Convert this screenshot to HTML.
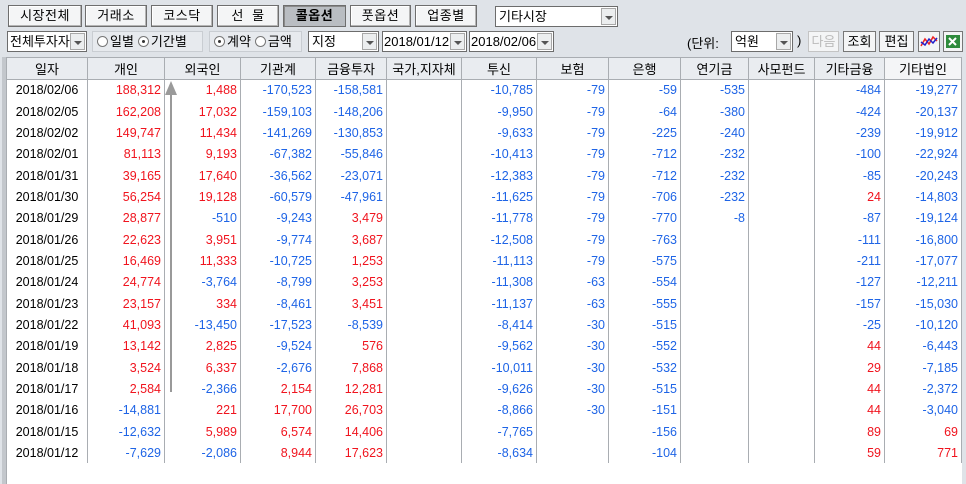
<!DOCTYPE html>
<html><head><meta charset="utf-8"><style>
*{margin:0;padding:0;box-sizing:border-box}
body{width:966px;height:484px;background:#dfe3e8;font-family:"Liberation Sans","Noto Sans CJK KR","NanumGothic",sans-serif;font-size:12px;color:#000;position:relative;overflow:hidden}
.a{position:absolute}
.btn{position:absolute;top:5px;height:22px;background:#f4f5f6;border:1px solid #6e6e6e;box-shadow:inset -1px -1px 0 #b5b5b5,inset 1px 1px 0 #fff;text-align:center;line-height:20px;font-size:13px;letter-spacing:0.5px}
.btn.on{background:#b9bdc2;font-weight:bold;box-shadow:inset 1px 1px 0 #8a8a8a}
.cb{position:absolute;height:21px;background:#fff;border:1px solid #6c6c6c;line-height:19px;padding-left:3px;font-size:13px}
.cb .dd{position:absolute;right:1px;top:1px;width:15px;height:17px;background:#eceeef;border:1px solid #a8a8a8}
.cb .dd:after{content:"";position:absolute;left:3px;top:7px;border-left:4px solid transparent;border-right:4px solid transparent;border-top:4px solid #555}
.grp{position:absolute;top:31px;height:21px;background:#e7eaee;border:1px solid #c9cdd2;line-height:19px;font-size:13px}
.rd{display:inline-block;width:11px;height:11px;border:1px solid #777;border-radius:50%;background:#fff;vertical-align:-1px;margin:0 2px 0 4px;position:relative}
.rd.on:after{content:"";position:absolute;left:3px;top:3px;width:3px;height:3px;border-radius:50%;background:#333}
.sb{position:absolute;top:31px;height:21px;background:#f4f5f6;border:1px solid #777;text-align:center;line-height:19px;font-size:13px}
table{position:absolute;left:6px;top:57px;border-collapse:collapse;table-layout:fixed;background:#fff}
th{height:22px;background:#e9ecf0;font-weight:normal;font-size:13px;border:1px solid #a9adb2;border-top:1px solid #a9adb2}
td{height:21.35px;text-align:right;padding-right:3px;border-left:1px solid #a9adb2;border-right:1px solid #a9adb2;font-size:12.5px;line-height:20px;white-space:nowrap}
td:first-child{text-align:center;padding:0}
.r{color:#f0141e}.b{color:#1e64e6}
</style></head><body>
<div class="btn" style="left:8px;width:74px">시장전체</div>
<div class="btn" style="left:85px;width:62px">거래소</div>
<div class="btn" style="left:151px;width:62px">코스닥</div>
<div class="btn" style="left:217px;width:62px">선 &nbsp;물</div>
<div class="btn on" style="left:283px;width:63px">콜옵션</div>
<div class="btn" style="left:350px;width:61px">풋옵션</div>
<div class="btn" style="left:415px;width:62px">업종별</div>
<div class="cb" style="left:495px;top:6px;width:123px">기타시장<div class="dd"></div></div>

<div class="cb" style="left:7px;top:31px;width:80px;padding-left:2px">전체투자자<div class="dd"></div></div>
<div class="grp" style="left:92px;width:111px"><span class="rd"></span>일별<span class="rd on"></span>기간별</div>
<div class="grp" style="left:209px;width:93px"><span class="rd on"></span>계약<span class="rd"></span>금액</div>
<div class="cb" style="left:308px;top:31px;width:71px">지정<div class="dd"></div></div>
<div class="cb" style="left:382px;top:31px;width:85px;padding-left:1px">2018/01/12<div class="dd"></div></div>
<div class="cb" style="left:469px;top:31px;width:85px;padding-left:1px">2018/02/06<div class="dd"></div></div>
<div class="a" style="left:687px;top:33px;font-size:13px">(단위:</div>
<div class="cb" style="left:731px;top:31px;width:62px">억원<div class="dd"></div></div>
<div class="a" style="left:797px;top:33px;font-size:13px">)</div>
<div class="sb" style="left:808px;width:31px;color:#bbb;border-color:#c4c4c4">다음</div>
<div class="sb" style="left:843px;width:33px">조회</div>
<div class="sb" style="left:879px;width:35px">편집</div>
<div class="sb" style="left:918px;width:22px"><svg width="18" height="15" style="margin-top:2px"><polyline points="1,12 5,5 9,10 13,3 17,7" fill="none" stroke="#e22" stroke-width="1.5"/><polyline points="1,8 5,11 9,5 13,9 17,4" fill="none" stroke="#22c" stroke-width="1.5"/></svg></div>
<div class="sb" style="left:943px;width:20px"><svg width="16" height="15" style="margin-top:2px"><rect x="1" y="1" width="14" height="13" fill="#2e8b3c"/><path d="M4 4l7 7M11 4l-7 7" stroke="#fff" stroke-width="2"/></svg></div>

<table>
<colgroup><col style="width:81px"><col style="width:77px"><col style="width:76px"><col style="width:75px"><col style="width:71px"><col style="width:75px"><col style="width:75px"><col style="width:72px"><col style="width:72px"><col style="width:68px"><col style="width:66px"><col style="width:70px"><col style="width:77px"></colgroup>
<tr><th>일자</th><th>개인</th><th>외국인</th><th>기관계</th><th>금융투자</th><th>국가,지자체</th><th>투신</th><th>보험</th><th>은행</th><th>연기금</th><th>사모펀드</th><th>기타금융</th><th style="background:#f4f5f7">기타법인</th></tr>
<tr><td>2018/02/06</td><td class="r">188,312</td><td class="r">1,488</td><td class="b">-170,523</td><td class="b">-158,581</td><td></td><td class="b">-10,785</td><td class="b">-79</td><td class="b">-59</td><td class="b">-535</td><td></td><td class="b">-484</td><td class="b">-19,277</td></tr>
<tr><td>2018/02/05</td><td class="r">162,208</td><td class="r">17,032</td><td class="b">-159,103</td><td class="b">-148,206</td><td></td><td class="b">-9,950</td><td class="b">-79</td><td class="b">-64</td><td class="b">-380</td><td></td><td class="b">-424</td><td class="b">-20,137</td></tr>
<tr><td>2018/02/02</td><td class="r">149,747</td><td class="r">11,434</td><td class="b">-141,269</td><td class="b">-130,853</td><td></td><td class="b">-9,633</td><td class="b">-79</td><td class="b">-225</td><td class="b">-240</td><td></td><td class="b">-239</td><td class="b">-19,912</td></tr>
<tr><td>2018/02/01</td><td class="r">81,113</td><td class="r">9,193</td><td class="b">-67,382</td><td class="b">-55,846</td><td></td><td class="b">-10,413</td><td class="b">-79</td><td class="b">-712</td><td class="b">-232</td><td></td><td class="b">-100</td><td class="b">-22,924</td></tr>
<tr><td>2018/01/31</td><td class="r">39,165</td><td class="r">17,640</td><td class="b">-36,562</td><td class="b">-23,071</td><td></td><td class="b">-12,383</td><td class="b">-79</td><td class="b">-712</td><td class="b">-232</td><td></td><td class="b">-85</td><td class="b">-20,243</td></tr>
<tr><td>2018/01/30</td><td class="r">56,254</td><td class="r">19,128</td><td class="b">-60,579</td><td class="b">-47,961</td><td></td><td class="b">-11,625</td><td class="b">-79</td><td class="b">-706</td><td class="b">-232</td><td></td><td class="r">24</td><td class="b">-14,803</td></tr>
<tr><td>2018/01/29</td><td class="r">28,877</td><td class="b">-510</td><td class="b">-9,243</td><td class="r">3,479</td><td></td><td class="b">-11,778</td><td class="b">-79</td><td class="b">-770</td><td class="b">-8</td><td></td><td class="b">-87</td><td class="b">-19,124</td></tr>
<tr><td>2018/01/26</td><td class="r">22,623</td><td class="r">3,951</td><td class="b">-9,774</td><td class="r">3,687</td><td></td><td class="b">-12,508</td><td class="b">-79</td><td class="b">-763</td><td></td><td></td><td class="b">-111</td><td class="b">-16,800</td></tr>
<tr><td>2018/01/25</td><td class="r">16,469</td><td class="r">11,333</td><td class="b">-10,725</td><td class="r">1,253</td><td></td><td class="b">-11,113</td><td class="b">-79</td><td class="b">-575</td><td></td><td></td><td class="b">-211</td><td class="b">-17,077</td></tr>
<tr><td>2018/01/24</td><td class="r">24,774</td><td class="b">-3,764</td><td class="b">-8,799</td><td class="r">3,253</td><td></td><td class="b">-11,308</td><td class="b">-63</td><td class="b">-554</td><td></td><td></td><td class="b">-127</td><td class="b">-12,211</td></tr>
<tr><td>2018/01/23</td><td class="r">23,157</td><td class="r">334</td><td class="b">-8,461</td><td class="r">3,451</td><td></td><td class="b">-11,137</td><td class="b">-63</td><td class="b">-555</td><td></td><td></td><td class="b">-157</td><td class="b">-15,030</td></tr>
<tr><td>2018/01/22</td><td class="r">41,093</td><td class="b">-13,450</td><td class="b">-17,523</td><td class="b">-8,539</td><td></td><td class="b">-8,414</td><td class="b">-30</td><td class="b">-515</td><td></td><td></td><td class="b">-25</td><td class="b">-10,120</td></tr>
<tr><td>2018/01/19</td><td class="r">13,142</td><td class="r">2,825</td><td class="b">-9,524</td><td class="r">576</td><td></td><td class="b">-9,562</td><td class="b">-30</td><td class="b">-552</td><td></td><td></td><td class="r">44</td><td class="b">-6,443</td></tr>
<tr><td>2018/01/18</td><td class="r">3,524</td><td class="r">6,337</td><td class="b">-2,676</td><td class="r">7,868</td><td></td><td class="b">-10,011</td><td class="b">-30</td><td class="b">-532</td><td></td><td></td><td class="r">29</td><td class="b">-7,185</td></tr>
<tr><td>2018/01/17</td><td class="r">2,584</td><td class="b">-2,366</td><td class="r">2,154</td><td class="r">12,281</td><td></td><td class="b">-9,626</td><td class="b">-30</td><td class="b">-515</td><td></td><td></td><td class="r">44</td><td class="b">-2,372</td></tr>
<tr><td>2018/01/16</td><td class="b">-14,881</td><td class="r">221</td><td class="r">17,700</td><td class="r">26,703</td><td></td><td class="b">-8,866</td><td class="b">-30</td><td class="b">-151</td><td></td><td></td><td class="r">44</td><td class="b">-3,040</td></tr>
<tr><td>2018/01/15</td><td class="b">-12,632</td><td class="r">5,989</td><td class="r">6,574</td><td class="r">14,406</td><td></td><td class="b">-7,765</td><td></td><td class="b">-156</td><td></td><td></td><td class="r">89</td><td class="r">69</td></tr>
<tr><td>2018/01/12</td><td class="b">-7,629</td><td class="b">-2,086</td><td class="r">8,944</td><td class="r">17,623</td><td></td><td class="b">-8,634</td><td></td><td class="b">-104</td><td></td><td></td><td class="r">59</td><td class="r">771</td></tr>
</table>
<div class="a" style="left:6px;top:463px;width:956px;height:21px;background:#fff;border-left:1px solid #a9adb2"></div>
<div class="a" style="left:2px;top:57px;width:4px;height:427px;background:#c3c7cc"></div>
<div class="a" style="left:170px;top:94px;width:2px;height:298px;background:#999"></div>
<div class="a" style="left:165px;top:81px;width:0;height:0;border-left:6px solid transparent;border-right:6px solid transparent;border-bottom:14px solid #9a9a9a"></div>
</body></html>
